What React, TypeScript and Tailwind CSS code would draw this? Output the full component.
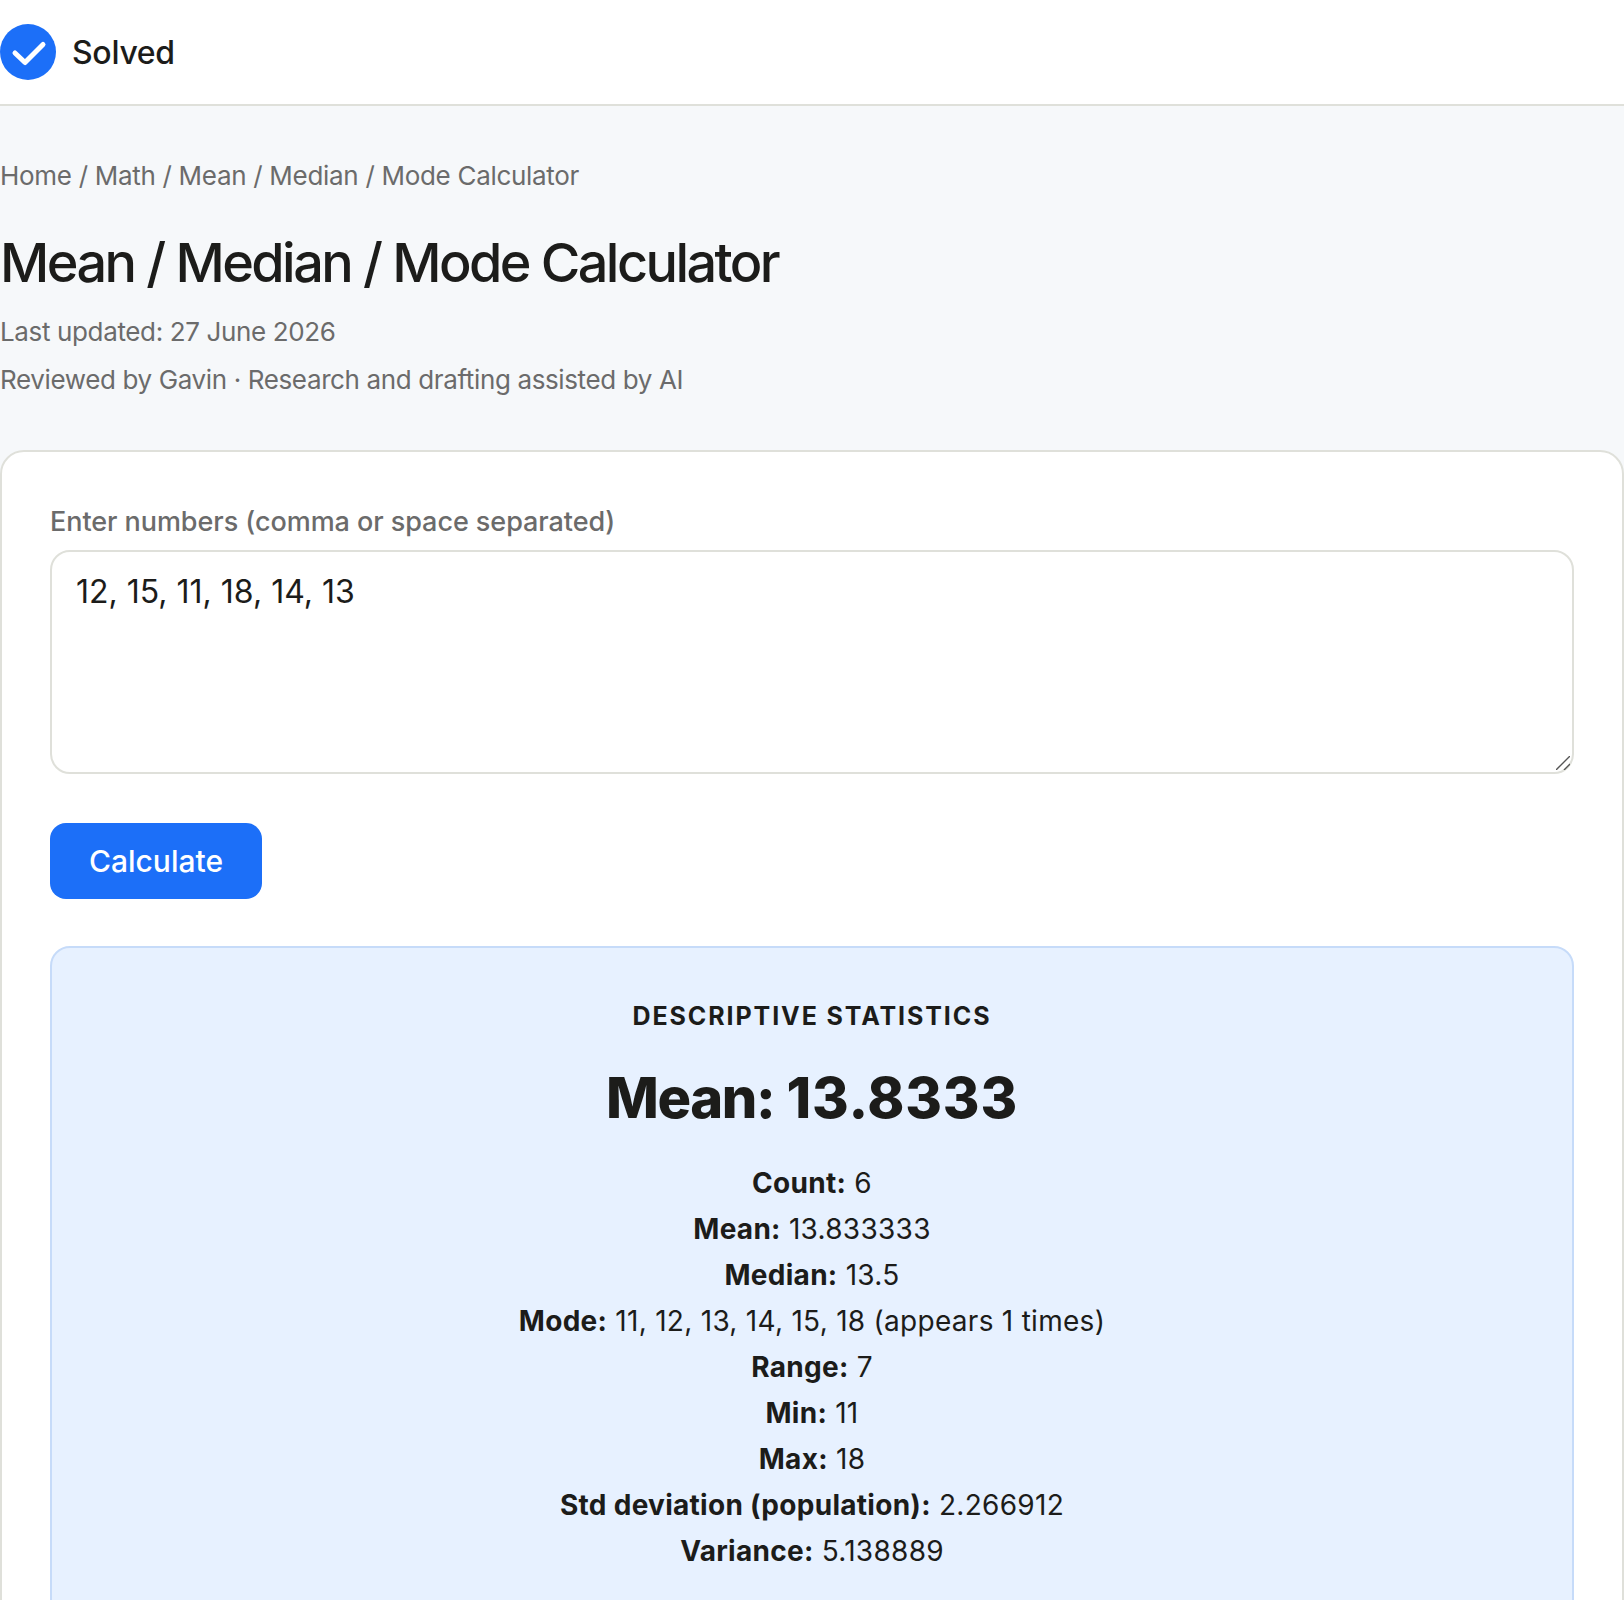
const stats = [
  ['Count:', '6'],
  ['Mean:', '13.833333'],
  ['Median:', '13.5'],
  ['Mode:', '11, 12, 13, 14, 15, 18 (appears 1 times)'],
  ['Range:', '7'],
  ['Min:', '11'],
  ['Max:', '18'],
  ['Std deviation (population):', '2.266912'],
  ['Variance:', '5.138889'],
]

export default function App() {
  return (
    <div className="h-[1600px] overflow-hidden bg-[#f6f8fa] font-['Inter',sans-serif] text-[#1c1c1a]">
      <header className="flex h-[106px] items-center gap-4 border-b-2 border-[#dfe0da] bg-white">
        <svg width="56" height="56" viewBox="0 0 56 56" className="shrink-0">
          <circle cx="28" cy="28" r="28" fill="#1c6ff8" />
          <path d="M15 29l10 9.5 18-18" fill="none" stroke="#fff" strokeWidth="5" strokeLinecap="round" strokeLinejoin="round" />
        </svg>
        <span className="mt-[2px] text-[32px] font-medium tracking-[-0.3px]">Solved</span>
      </header>

      <div className="pt-[53px]">
        <p className="text-[26px] leading-[34px] tracking-[-0.3px] text-[#6b6b6b]">Home / Math / Mean / Median / Mode Calculator</p>
        <h1 className="mt-[36px] text-[54px] leading-[68px] font-medium tracking-[-2.57px]">Mean / Median / Mode Calculator</h1>
        <p className="mt-[18px] text-[26px] leading-[34px] tracking-[-0.36px] text-[#6b6b6b]">Last updated: 27 June 2026</p>
        <p className="mt-[14px] text-[26px] leading-[34px] tracking-[-0.37px] text-[#6b6b6b]">Reviewed by Gavin · Research and drafting assisted by AI</p>
      </div>

      <main className="mt-[53px] rounded-t-[24px] border-2 border-[#dfe0da] bg-white px-[48px] pt-[53px]">
        <label className="block text-[27px] leading-[34px] font-medium tracking-[-0.06px] text-[#6b6b6b]">Enter numbers (comma or space separated)</label>
        <div className="relative mt-[11px]">
          <textarea
            defaultValue="12, 15, 11, 18, 14, 13"
            className="block h-[224px] w-full resize-none rounded-[20px] border-2 border-[#dfe0da] bg-white px-[24px] py-[20px] text-[32px] leading-[40px] text-[#1c1c1a] outline-none"
          />
          <svg width="14" height="14" viewBox="0 0 14 14" className="absolute right-[4px] bottom-[4px]">
            <path d="M0 14L14 0M8 14l6-6" fill="none" stroke="#555" strokeWidth="1.4" />
          </svg>
        </div>
        <button className="mt-[49px] block h-[76px] w-[212px] rounded-[16px] bg-[#1c6ff8] text-[30px] font-medium text-white">Calculate</button>
        <section className="mt-[47px] rounded-t-[20px] border-2 border-[#c6dbf9] bg-[#e7f1ff] pt-[52px] pb-[60px] text-center">
          <p className="text-[25px] leading-[32px] font-bold tracking-[1.9px]">DESCRIPTIVE STATISTICS</p>
          <p className="mt-[30px] text-[56px] leading-[72px] font-extrabold">
            <span className="tracking-[-1.4px]">Mean:</span> <span className="tracking-[0.8px]">13.8333</span>
          </p>
          <div className="mt-[26px] text-[28px] leading-[46px] tracking-[0.28px]">
            {stats.map(([k, v]) => (
              <div key={k}><strong className="font-bold">{k}</strong> {v}</div>
            ))}
          </div>
        </section>
      </main>
    </div>
  )
}
